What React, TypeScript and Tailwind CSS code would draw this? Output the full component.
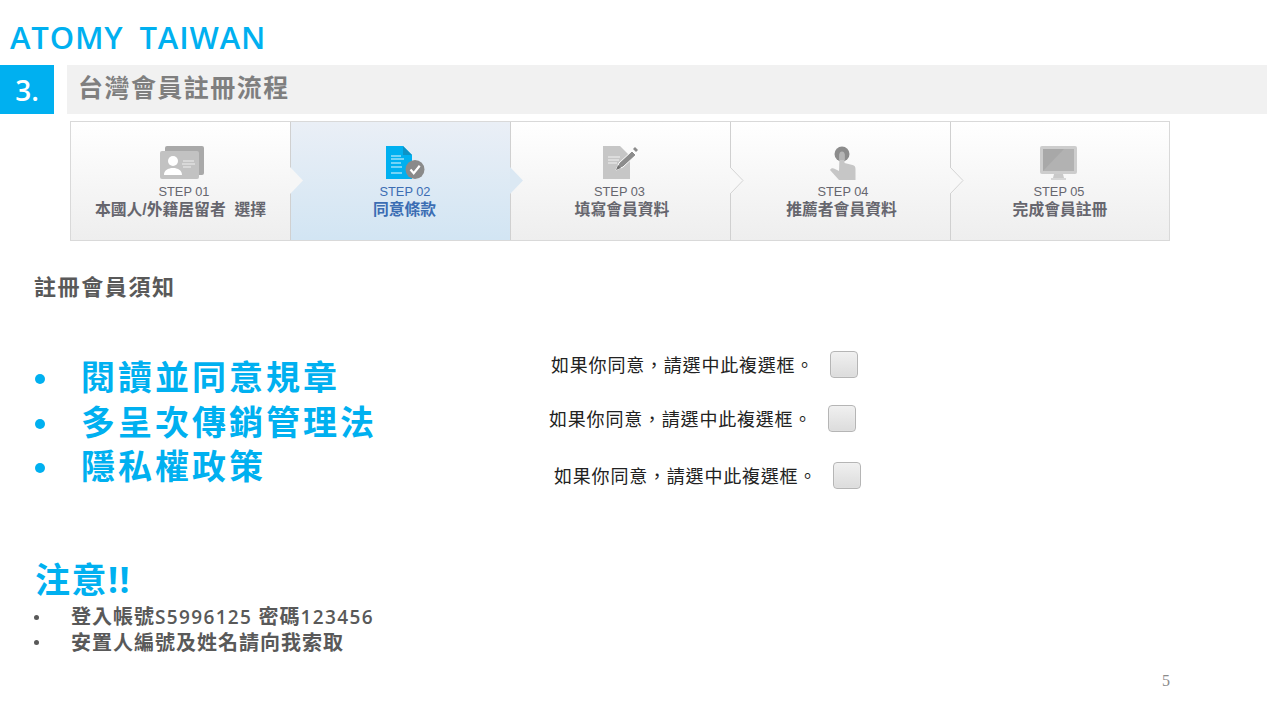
import React from "react";

const cjk = "font-['Open_Sans','Noto_Sans_CJK_TC',sans-serif]";
const ui = "font-['Liberation_Sans','Noto_Sans_CJK_TC',sans-serif]";

const CardIcon = () => (
  <svg width="44" height="34" viewBox="0 0 44 34">
    <rect x="5" y="0" width="39" height="29" rx="2" fill="#a9a9a9" />
    <rect x="0" y="5" width="39" height="28" rx="2" fill="#c2c2c2" />
    <circle cx="13" cy="15" r="5" fill="#fff" />
    <path d="M4 29c0-5 4-6 7-7h4c3 1 7 2 7 7z" fill="#fff" />
    <path d="M23 15h11M22 18h13M23 21h8" stroke="#eee" strokeWidth="1" fill="none" />
  </svg>
);

const DocCheckIcon = () => (
  <svg width="40" height="34" viewBox="0 0 40 34">
    <path d="M0 0h17l9 9v24H0z" fill="#00b0f0" />
    <path d="M17 0l9 9h-9z" fill="#0e93c6" />
    <path d="M5 10h10M5 13h13M5 17h10M5 21h11M5 27h11" stroke="#e6f7fe" strokeWidth="1.2" fill="none" />
    <circle cx="29" cy="23.5" r="9.5" fill="#8a8a8a" />
    <path d="M24.5 23.5l3.2 3.8 6-7.5" stroke="#fff" strokeWidth="2.2" fill="none" />
  </svg>
);

const PenIcon = () => (
  <svg width="36" height="34" viewBox="0 0 36 34">
    <path d="M0 0h17l10 10v23H0z" fill="#c6c6c6" />
    <path d="M5 11h12M5 14h11M5 17h9" stroke="#f2f2f2" strokeWidth="1.2" fill="none" />
    <path d="M13 24l3-7L29 5l4 4-13 12z" fill="#8c8c8c" stroke="#fff" strokeWidth="1" />
    <path d="M30 3l2-2 3 3-2 2z" fill="#8c8c8c" />
    <path d="M13 24l5-2-3-3z" fill="#707070" />
  </svg>
);

const TouchIcon = () => (
  <svg width="26" height="34" viewBox="0 0 26 34">
    <circle cx="12" cy="8" r="7.5" fill="#8c8c8c" />
    <path d="M9.5 9a2.5 2.5 0 0 1 5 0v8l8 2c2 .5 3 1.5 3 4v11H9L0 24c1-2 3-2 5-1l4 2z" fill="#c6c6c6" />
    <path d="M9.5 8a2.5 2.5 0 0 1 5 0v6h-5z" fill="#b5b5b5" />
  </svg>
);

const MonitorIcon = () => (
  <svg width="37" height="34" viewBox="0 0 37 34">
    <rect x="0" y="0" width="37" height="28" rx="2" fill="#cdcdcd" />
    <rect x="3" y="3" width="31" height="22" fill="#a8a8a8" />
    <path d="M3 25L24 3h10v22z" fill="#b2b2b2" />
    <path d="M14 28h9l1 4H13z" fill="#c9c9c9" />
    <rect x="11" y="32" width="15" height="2" fill="#d6d6d6" />
  </svg>
);

const steps = [
  { step: "STEP 01", label: "本國人/外籍居留者  選擇", icon: <CardIcon />, cell: "w-[219px]", iconX: "ml-[3px]", stepX: "ml-[7px]", labelX: "" },
  { step: "STEP 02", label: "同意條款", icon: <DocCheckIcon />, active: true, cell: "w-[220px] border-l border-[#d0d0d0]", iconX: "ml-[10px]", stepX: "ml-[9px]", labelX: "ml-[8px]" },
  { step: "STEP 03", label: "填寫會員資料", icon: <PenIcon />, cell: "w-[220px] border-l border-[#d0d0d0]", iconX: "", stepX: "mr-[2px]", labelX: "ml-[3px]" },
  { step: "STEP 04", label: "推薦者會員資料", icon: <TouchIcon />, cell: "w-[220px] border-l border-[#d0d0d0]", iconX: "ml-[4px]", stepX: "ml-[5px]", labelX: "ml-[2px]" },
  { step: "STEP 05", label: "完成會員註冊", icon: <MonitorIcon />, cell: "w-[219px] border-l border-[#d0d0d0]", iconX: "mr-[3px]", stepX: "mr-[2px]", labelX: "" },
];

const Arrow = ({ fill, line }: { fill: string; line: boolean }) => (
  <svg width="14" height="28" viewBox="0 0 14 28" className="absolute right-[-14px] top-[45px] z-10">
    <path d="M0 0L13 13.5 0 27z" fill={fill} />
    {line && <path d="M0 0L13 13.5 0 27" fill="none" stroke="#d4d4d4" strokeWidth="1" />}
  </svg>
);

const StepBar = () => (
  <div className={`ml-[70px] mt-[7px] flex h-[120px] w-[1100px] border border-[#d9d9d9] ${ui}`}>
    {steps.map((s, i) => (
      <div
        key={s.step}
        className={`relative flex shrink-0 flex-col items-center pt-[24px] ${s.cell} ${
          s.active ? "bg-gradient-to-b from-[#eaeff6] to-[#d2e5f3]" : "bg-gradient-to-b from-white to-[#eeeeee]"
        }`}
      >
        <div className={`flex h-[34px] items-center ${s.iconX}`}>{s.icon}</div>
        <div className={`mt-[4px] text-[12.8px] leading-[15px] ${s.stepX} ${s.active ? "text-[#3b6db3]" : "text-[#66666e]"}`}>{s.step}</div>
        <div className={`mt-[1px] text-[15.8px] font-bold leading-[20px] whitespace-pre ${s.labelX} ${s.active ? "text-[#3b6db3]" : "text-[#66666e]"}`}>{s.label}</div>
        {i < 4 && <Arrow fill={i < 2 ? (s.active ? "#dbe8f3" : "#f6f6f6") : "#f8f8f8"} line={i >= 2} />}
      </div>
    ))}
  </div>
);

const Bullet = ({ text, className }: { text: string; className?: string }) => (
  <li className={`flex items-center ${className ?? ""}`}>
    <span className="ml-[1px] mt-[4px] h-[10px] w-[10px] rounded-full bg-[#00b0f0]" />
    <span className="ml-[36px] text-[34px] font-bold leading-[44px] tracking-[3px] text-[#00b0f0]">{text}</span>
  </li>
);

const Agree = ({ className }: { className: string }) => (
  <div className={`flex items-center ${className}`}>
    <span className={`text-[18px] leading-[26px] tracking-[0.8px] text-[#222] ${cjk}`}>如果你同意，請選中此複選框。</span>
    <span className="ml-[16px] h-[27px] w-[28px] rounded-[4px] border border-[#b5b5b5] bg-gradient-to-b from-[#f0f0f0] to-[#dcdcdc] shadow-[inset_0_0_1px_#fff]" />
  </div>
);

export default function App() {
  return (
    <div className={`h-[713px] w-[1267px] overflow-hidden bg-white ${cjk}`}>
      <div className="pl-[10px] pt-[17px] text-[31px] font-semibold leading-[40px] tracking-[0.85px] [word-spacing:7px] text-[#00b0f0]">ATOMY TAIWAN</div>
      <div className="mt-[8px] flex h-[49px]">
        <div className="flex w-[54px] items-center justify-center bg-[#00b0f0] text-[28px] font-semibold text-white">3.</div>
        <div className="ml-[13px] flex flex-1 items-center bg-[#f1f1f1] pb-[3px] pl-[11px] text-[25px] font-bold tracking-[1.45px] text-[#7f7f7f]">台灣會員註冊流程</div>
      </div>
      <StepBar />
      <div className="ml-[34px] mt-[29px] text-[22px] font-bold leading-[32px] tracking-[1.6px] text-[#595959]">註冊會員須知</div>
      <div className="mt-[52px] flex">
        <ul className="ml-[34px] mt-[1px] w-[500px]">
          <Bullet text="閱讀並同意規章" />
          <Bullet text="多呈次傳銷管理法" className="mt-[1px]" />
          <Bullet text="隱私權政策" />
        </ul>
        <div className="-mt-[3px] flex flex-col">
          <Agree className="ml-[17px]" />
          <Agree className="ml-[15px] mt-[27px]" />
          <Agree className="ml-[20px] mt-[30px]" />
        </div>
      </div>
      <div className="ml-[35px] mt-[68px] text-[35px] font-bold leading-[46px] tracking-[1.5px] text-[#00b0f0]">注意!!</div>
      <ul className="ml-[34px] mt-[1px] text-[20px] font-semibold leading-[25px] tracking-[1px] text-[#595959]">
        <li className="flex items-center">
          <span className="h-[5px] w-[5px] rounded-full bg-[#595959]" />
          <span className="ml-[32px]">登入帳號<span className="text-[19px] tracking-[1.35px]">S5996125 </span>密碼<span className="text-[19px] tracking-[1.35px]">123456</span></span>
        </li>
        <li className="flex items-center">
          <span className="h-[5px] w-[5px] rounded-full bg-[#595959]" />
          <span className="ml-[32px]">安置人編號及姓名請向我索取</span>
        </li>
      </ul>
      <div className="ml-[1162px] mt-[16px] font-['Liberation_Serif',serif] text-[16px] leading-[20px] text-[#8b8b8b]">5</div>
    </div>
  );
}
